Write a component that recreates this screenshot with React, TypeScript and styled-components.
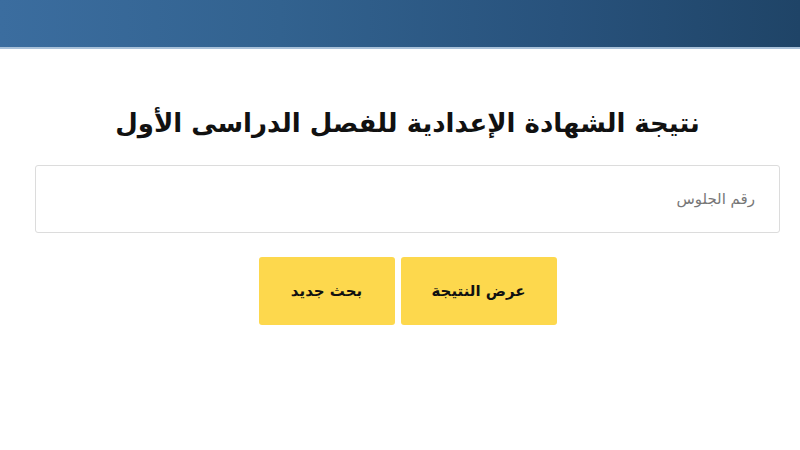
import React from "react";
import styled, { createGlobalStyle } from "styled-components";

const GlobalStyle = createGlobalStyle`
  html, body {
    margin: 0;
    padding: 0;
    background: #ffffff;
    font-family: "DejaVu Sans", "Noto Sans", sans-serif;
  }
`;

const Page = styled.div`
  width: 800px;
  height: 450px;
  overflow: hidden;
  background: #ffffff;
`;

const Header = styled.div`
  height: 47px;
  background: linear-gradient(90deg, #3b6d9f 0%, #32628f 35%, #28527c 70%, #1f4467 100%);
  border-bottom: 2px solid #a9c1d9;
`;

const Content = styled.div`
  width: 745px;
  margin: 0 0 0 35px;
  display: flex;
  flex-direction: column;
  align-items: center;
  direction: rtl;
`;

const Title = styled.h1`
  margin: 50px 0 0;
  height: 48px;
  line-height: 48px;
  font-size: 26px;
  font-weight: bold;
  color: #111111;
  text-align: center;
`;

const SeatInput = styled.input`
  box-sizing: border-box;
  margin-top: 18px;
  width: 745px;
  height: 68px;
  padding: 0 24px;
  border: 1px solid #dcdcdc;
  border-radius: 3px;
  font-family: "DejaVu Sans", sans-serif;
  font-size: 15px;
  color: #333;
  direction: rtl;
  outline: none;
  &::placeholder {
    color: #777777;
  }
`;

const Buttons = styled.div`
  display: flex;
  gap: 6px;
  margin-top: 24px;
`;

const ActionButton = styled.button<{ $w: number }>`
  width: ${(p) => p.$w}px;
  height: 68px;
  border: none;
  border-radius: 3px;
  background: #fdd84d;
  color: #111111;
  font-family: "DejaVu Sans", sans-serif;
  font-size: 15px;
  font-weight: bold;
  cursor: pointer;
`;

export default function App() {
  return (
    <Page>
      <GlobalStyle />
      <Header />
      <Content>
        <Title>نتيجة الشهادة الإعدادية للفصل الدراسى الأول</Title>
        <SeatInput placeholder="رقم الجلوس" />
        <Buttons>
          <ActionButton $w={156}>عرض النتيجة</ActionButton>
          <ActionButton $w={136}>بحث جديد</ActionButton>
        </Buttons>
      </Content>
    </Page>
  );
}
